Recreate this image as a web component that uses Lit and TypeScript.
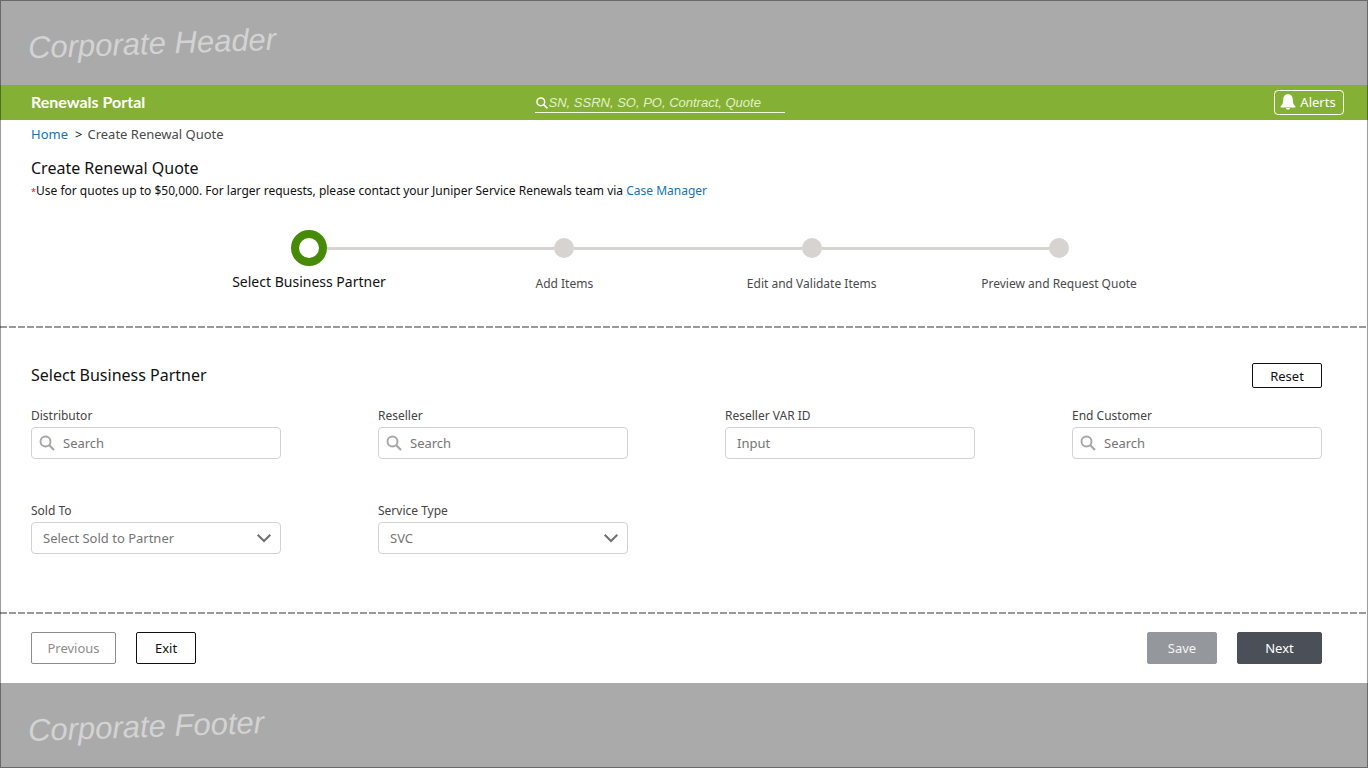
import { LitElement, html, css, svg } from "lit";
import { customElement, property, state } from "lit/decorators.js";

const magnifier = svg`<circle cx="6.5" cy="6.5" r="5" fill="none" stroke="currentColor" stroke-width="1.9" /><path d="M10 10l5 5" fill="none" stroke="currentColor" stroke-width="2.1" />`;

const boxStyles = css`
  :host {
    display: block;
    min-width: 0;
  }
  *,
  *::before {
    box-sizing: border-box;
  }
  .label {
    display: block;
    font-size: 12px;
    line-height: 16px;
    margin-bottom: 3px;
    color: #444;
  }
  .box {
    display: flex;
    align-items: center;
    height: 32px;
    border: 1px solid #d2d2d2;
    border-radius: 4px;
    background: #fff;
  }
  .box:focus-within {
    border-color: #84b135;
  }
`;

@customElement("text-field")
export class TextField extends LitElement {
  @property() label = "";
  @property() placeholder = "";
  @property({ type: Boolean }) search = false;

  static styles = [
    boxStyles,
    css`
      .glyph {
        flex: none;
        width: 16px;
        height: 16px;
        margin-left: 7px;
        color: #a6a6a6;
      }
      .input {
        flex: 1;
        min-width: 0;
        height: 100%;
        padding: 0 11px;
        border: 0;
        outline: 0;
        background: none;
        font: inherit;
        font-size: 13px;
        color: #333;
      }
      .glyph + .input {
        padding-left: 8px;
      }
      .input::placeholder {
        color: #757575;
        opacity: 1;
      }
    `,
  ];

  render() {
    return html`
      <label class="label" for="field">${this.label}</label>
      <div class="box">
        ${this.search
          ? html`<svg class="glyph" viewBox="0 0 16 16" aria-hidden="true">${magnifier}</svg>`
          : ""}
        <input class="input" id="field" type="text" placeholder=${this.placeholder} />
      </div>
    `;
  }
}

@customElement("select-field")
export class SelectField extends LitElement {
  @property() label = "";
  @property({ attribute: false }) options: string[] = [];

  static styles = [
    boxStyles,
    css`
      .box {
        display: grid;
        align-items: center;
      }
      .select,
      .chevron {
        grid-area: 1 / 1;
      }
      .select {
        width: 100%;
        height: 30px;
        padding: 0 32px 0 11px;
        border: 0;
        outline: 0;
        appearance: none;
        background: none;
        font: inherit;
        font-size: 13px;
        color: #757575;
      }
      .chevron {
        justify-self: end;
        width: 16px;
        height: 10px;
        margin-right: 8px;
        pointer-events: none;
      }
    `,
  ];

  render() {
    return html`
      <label class="label" for="field">${this.label}</label>
      <div class="box">
        <select class="select" id="field">
          ${this.options.map((o) => html`<option>${o}</option>`)}
        </select>
        <svg class="chevron" viewBox="0 0 16 10" aria-hidden="true">
          <path d="M1.700 1.800L8 8l6.300-6.200" fill="none" stroke="#707070" stroke-width="2" />
        </svg>
      </div>
    `;
  }
}

@customElement("step-track")
export class StepTrack extends LitElement {
  @property({ attribute: false }) steps: string[] = [];
  @property({ type: Number }) current = 0;

  static styles = css`
    :host {
      display: block;
    }
    .track {
      display: flex;
      margin: 0;
      padding: 0;
      list-style: none;
    }
    .step {
      flex: none;
      display: flex;
      flex-direction: column;
      align-items: center;
      width: 20px;
    }
    .marker {
      display: flex;
      align-items: center;
      height: 36px;
    }
    .dot {
      box-sizing: border-box;
      width: 20px;
      height: 20px;
      border-radius: 50%;
      background: #d6d3d1;
    }
    .name {
      margin-top: 8px;
      font-size: 12px;
      line-height: 20px;
      white-space: nowrap;
      color: #4a4a4a;
    }
    .active {
      width: 36px;
    }
    .active .dot {
      width: 36px;
      height: 36px;
      border: 8px solid #468a07;
      background: #fff;
    }
    .active .name {
      font-size: 14px;
      color: #111;
      margin-top: 6px;
    }
    .line {
      flex: 1;
      height: 3px;
      margin-top: 17px;
      background: #d6d3d1;
    }
  `;

  render() {
    return html`
      <ol class="track">
        ${this.steps.map(
          (name, i) => html`
            ${i ? html`<li class="line" role="presentation"></li>` : ""}
            <li class="step ${i === this.current ? "active" : ""}">
              <span class="marker"><span class="dot"></span></span>
              <span class="name">${name}</span>
            </li>
          `,
        )}
      </ol>
    `;
  }
}

@customElement("app-root")
export class AppRoot extends LitElement {
  @state() private step = 0;

  private steps = ["Select Business Partner", "Add Items", "Edit and Validate Items", "Preview and Request Quote"];

  static styles = css`
    :host {
      display: block;
      font-family: "Noto Sans", sans-serif;
      color: #111;
    }
    *,
    *::after {
      box-sizing: border-box;
    }
    .page {
      position: relative;
      display: flex;
      flex-direction: column;
      min-height: 100vh;
      background: #fff;
    }
    .page::after {
      content: "";
      position: absolute;
      inset: 0;
      border: 1px solid rgba(0, 0, 0, 0.38);
      pointer-events: none;
    }
    .band {
      display: flex;
      align-items: center;
      height: 85px;
      padding: 2px 28px 0;
      background: #aaa;
      color: #d3d3d3;
      font: italic 31px/36px "Liberation Sans", sans-serif;
    }
    .tilt {
      transform: rotate(-2deg);
    }
    .bar {
      display: grid;
      grid-template-columns: 9fr 250px 10fr;
      align-items: center;
      height: 35px;
      padding: 0 24px 0 31px;
      background: #84b135;
      color: #fff;
    }
    .brand {
      padding-bottom: 2px;
      font: bold 16px/20px Lato, sans-serif;
    }
    .finder {
      display: flex;
      align-items: flex-end;
      height: 20px;
      border-bottom: 1px solid #f4fbe4;
    }
    .finder-icon {
      flex: none;
      width: 14px;
      height: 14px;
      margin-bottom: 2px;
    }
    .finder-input {
      flex: 1;
      min-width: 0;
      padding: 0;
      border: 0;
      outline: 0;
      background: none;
      color: #fff;
      font: italic 13px/18px "Liberation Sans", sans-serif;
    }
    .finder-input::placeholder {
      color: #e3f0c8;
      opacity: 1;
    }
    .alerts {
      justify-self: end;
      display: flex;
      align-items: center;
      justify-content: center;
      gap: 4px;
      width: 70px;
      height: 25px;
      padding: 0 2px 1px 0;
      border: 1px solid #fff;
      border-radius: 4px;
      background: none;
      color: #fff;
      font: inherit;
      font-size: 13px;
    }
    .bell {
      width: 16px;
      height: 16px;
    }
    .intro {
      padding: 4px 46px 0 31px;
    }
    .crumbs {
      display: flex;
      font-size: 13px;
      line-height: 20px;
      color: #4a4a4a;
    }
    .sep {
      margin: 0 5px 0 7px;
      color: #111;
    }
    a {
      color: #1573b0;
      text-decoration: none;
    }
    .title {
      margin: 0;
      font-size: 16px;
      line-height: 24px;
      font-weight: 400;
    }
    .intro .title {
      margin-top: 12px;
    }
    .note {
      margin: 0;
      font-size: 12px;
      line-height: 22px;
    }
    .star {
      font-size: 9px;
      line-height: 1;
      color: #b3261e;
    }
    .track {
      padding: 28px 299px 32px 291px;
    }
    .rule {
      height: 2px;
      margin: 0;
      border: 0;
      background: repeating-linear-gradient(90deg, #999 0 7px, transparent 7px 9px);
    }
    .form {
      padding: 35px 46px 58px 31px;
    }
    .form-head {
      display: flex;
      align-items: flex-start;
      justify-content: space-between;
      margin-bottom: 20px;
    }
    .fields {
      display: grid;
      grid-template-columns: repeat(4, 1fr);
      gap: 44px 97px;
    }
    .actions {
      display: flex;
      gap: 20px;
      padding: 18px 46px 19px 31px;
    }
    .btn {
      height: 32px;
      padding: 0;
      border: 1px solid #111;
      border-radius: 2px;
      background: #fff;
      color: #111;
      font: inherit;
      font-size: 13px;
    }
    .small {
      width: 60px;
    }
    .medium {
      width: 70px;
    }
    .large {
      width: 85px;
    }
    .reset {
      height: 25px;
    }
    .muted {
      border-color: #8c8c8c;
      color: #8c8c8c;
    }
    .save {
      margin-left: auto;
      border-color: #94989d;
      background: #94989d;
      color: #f4f4f4;
    }
    .next {
      border-color: #4b5058;
      background: #4b5058;
      color: #fff;
    }
  `;

  render() {
    return html`
      <div class="page">
        <header class="band"><span class="tilt">Corporate Header</span></header>
        <nav class="bar">
          <span class="brand">Renewals Portal</span>
          <div class="finder">
            <svg class="finder-icon" viewBox="-1 -1 18 18" aria-hidden="true">${magnifier}</svg>
            <input
              class="finder-input"
              type="text"
              aria-label="Search renewals"
              placeholder="SN, SSRN, SO, PO, Contract, Quote"
            />
          </div>
          <button class="alerts" type="button">
            <svg class="bell" viewBox="0 0 16 16" aria-hidden="true">
              <path
                fill="currentColor"
                d="M8 .3C5 .3 3.300 2.500 3.200 5.500 3.100 9 2.700 10.800.6 12.300v1.100h14.800v-1.100C13.300 10.800 12.900 9 12.800 5.500 12.700 2.500 11 .3 8 .3zM5.900 14a2.100 1.800 0 0 0 4.200 0z"
              />
            </svg>
            Alerts
          </button>
        </nav>
        <main>
          <section class="intro">
            <div class="crumbs">
              <a href="#">Home</a><span class="sep">&gt;</span><span>Create Renewal Quote</span>
            </div>
            <h1 class="title">Create Renewal Quote</h1>
            <p class="note">
              <span class="star">*</span>Use for quotes up to $50,000. For larger requests, please contact your Juniper
              Service Renewals team via <a href="#">Case Manager</a>
            </p>
          </section>
          <step-track class="track" .steps=${this.steps} .current=${this.step}></step-track>
          <hr class="rule" />
          <section class="form">
            <div class="form-head">
              <h2 class="title">${this.steps[this.step]}</h2>
              <button class="btn medium reset" type="button">Reset</button>
            </div>
            <div class="fields">
              <text-field label="Distributor" placeholder="Search" search></text-field>
              <text-field label="Reseller" placeholder="Search" search></text-field>
              <text-field label="Reseller VAR ID" placeholder="Input"></text-field>
              <text-field label="End Customer" placeholder="Search" search></text-field>
              <select-field label="Sold To" .options=${["Select Sold to Partner"]}></select-field>
              <select-field label="Service Type" .options=${["SVC"]}></select-field>
            </div>
          </section>
          <hr class="rule" />
          <div class="actions">
            <button class="btn large muted" type="button">Previous</button>
            <button class="btn small" type="button">Exit</button>
            <button class="btn medium save" type="button">Save</button>
            <button class="btn large next" type="button">Next</button>
          </div>
        </main>
        <footer class="band"><span class="tilt">Corporate Footer</span></footer>
      </div>
    `;
  }
}
